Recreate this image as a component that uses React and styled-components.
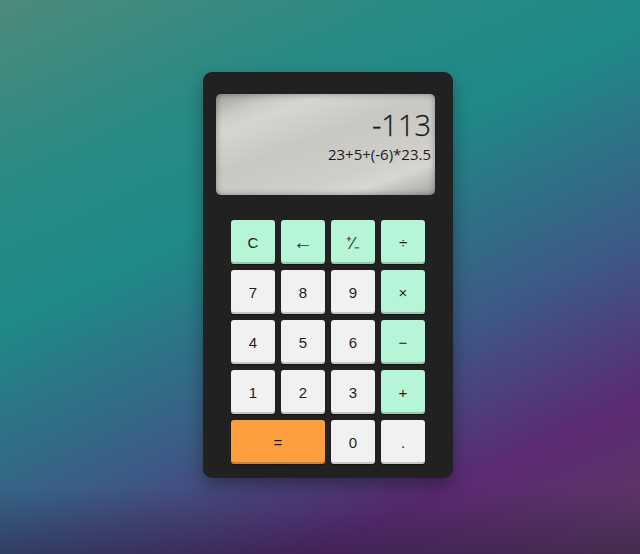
import React from "react";
import styled, { createGlobalStyle } from "styled-components";

const Global = createGlobalStyle`
  html, body { margin: 0; padding: 0; height: 100%; }
  body {
    font-family: "Liberation Sans", Arial, sans-serif;
    background:
      linear-gradient(to bottom, rgba(0,0,0,0) 88%, rgba(20,20,40,0.35) 100%),
      linear-gradient(155deg, #4d8a7c 0%, #2a8a84 22%, #1f8a88 38%, #3b5c86 62%, #5b2a72 82%, #5e3a62 100%);
    min-height: 554px;
  }
  #root { min-height: 554px; }
`;

const Page = styled.div`
  display: flex;
  align-items: flex-start;
  padding: 72px 0 0 203px;
`;

const Body = styled.div`
  width: 250px;
  height: 406px;
  box-sizing: border-box;
  background: #212121;
  border-radius: 9px;
  padding: 22px 0 0 0;
  display: flex;
  flex-direction: column;
  box-shadow: 0 8px 18px rgba(0, 0, 0, 0.35);
`;

const Display = styled.div`
  width: 219px;
  height: 101px;
  margin-left: 13px;
  box-sizing: border-box;
  border-radius: 5px;
  background: linear-gradient(
    160deg,
    #a2a19c 0%,
    #cbcac4 14%,
    #d6d5cf 22%,
    #c8c7c2 45%,
    #cfcec8 70%,
    #d7d6d0 82%,
    #a6a5a0 100%
  );
  box-shadow: inset 0 0 6px rgba(0, 0, 0, 0.35);
  display: flex;
  flex-direction: column;
  align-items: flex-end;
  padding: 12px 4px 0 0;
  font-family: "Open Sans", "Noto Sans", sans-serif;
  color: #1c1c1c;
`;

const Result = styled.div`
  font-size: 29px;
  font-weight: 300;
  line-height: 37px;
  -webkit-text-stroke: 0.3px #1c1c1c;
`;

const Expr = styled.div`
  font-size: 15px;
  font-weight: 400;
  line-height: 20px;
  margin-top: 1px;
`;

const Keys = styled.div`
  margin: 25px auto 0;
  display: grid;
  grid-template-columns: repeat(4, 44px);
  grid-auto-rows: 44px;
  gap: 6px;
`;

const colors = {
  op: "#b6f5d6",
  num: "#f1f1f1",
  eq: "#fd9e3e",
};

const Key = styled.button`
  border: none;
  margin: 0;
  padding: 0;
  border-radius: 3px;
  background: ${(p) => colors[p.$kind]};
  grid-column: span ${(p) => p.$span || 1};
  font-family: "Liberation Sans", Arial, sans-serif;
  font-size: ${(p) => p.$size || 15}px;
  color: ${(p) => (p.$size ? "#2e2e2e" : "#1e1e1e")};
  display: flex;
  align-items: center;
  justify-content: center;
  box-shadow: inset 0 -2px 0 rgba(0, 0, 0, 0.18), 0 1px 1px rgba(0, 0, 0, 0.5);
`;

const keys = [
  ["C", "op"],
  ["←", "op", 1, 20],
  ["⁺⁄₋", "op", 1, 17],
  ["÷", "op"],
  ["7", "num"],
  ["8", "num"],
  ["9", "num"],
  ["×", "op"],
  ["4", "num"],
  ["5", "num"],
  ["6", "num"],
  ["−", "op"],
  ["1", "num"],
  ["2", "num"],
  ["3", "num"],
  ["+", "op"],
  ["=", "eq", 2],
  ["0", "num"],
  [".", "num"],
];

export default function App() {
  return (
    <>
      <Global />
      <Page>
        <Body>
          <Display>
            <Result>-113</Result>
            <Expr>23+5+(-6)*23.5</Expr>
          </Display>
          <Keys>
            {keys.map(([label, kind, span, size]) => (
              <Key key={label} $kind={kind} $span={span} $size={size}>
                {label}
              </Key>
            ))}
          </Keys>
        </Body>
      </Page>
    </>
  );
}
